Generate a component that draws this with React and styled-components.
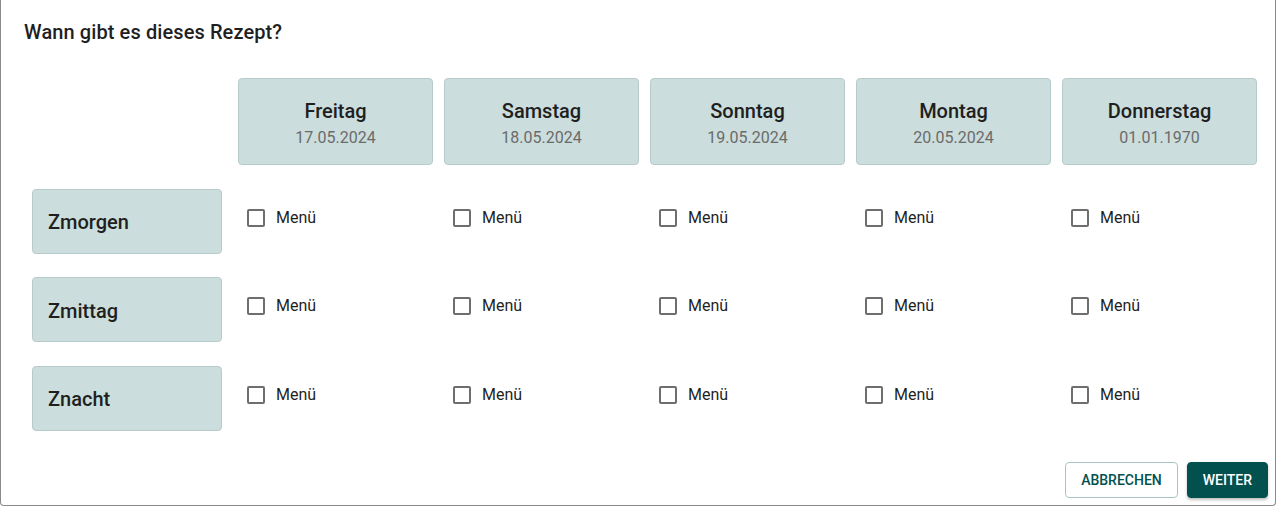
import React from 'react';
import styled, { createGlobalStyle } from 'styled-components';

const colors = {
  text: '#1f1f1f',
  muted: '#6b6b6b',
  card: '#cbdddc',
  cardBorder: '#b7cbca',
  teal: '#03514f',
  frame: '#8a8a8a',
};

const GlobalStyle = createGlobalStyle`
  html, body {
    margin: 0;
    padding: 0;
    background: #ffffff;
    font-family: Roboto, "Liberation Sans", sans-serif;
  }
`;

const Dialog = styled.div`
  box-sizing: border-box;
  width: 1276px;
  height: 506px;
  border: 1px solid ${colors.frame};
  border-top: none;
  border-radius: 0 0 4px 4px;
  background: #fff;
  display: flex;
  flex-direction: column;
`;

const Title = styled.h2`
  margin: 0;
  padding: 19px 23px 0;
  font-size: 20px;
  font-weight: 500;
  line-height: 26px;
  letter-spacing: 0.1px;
  color: ${colors.text};
`;

const Grid = styled.div`
  display: grid;
  grid-template-columns: repeat(6, 195px);
  grid-template-rows: 87px repeat(3, 65px);
  column-gap: 11px;
  row-gap: 23.5px;
  padding: 33px 0 0 31px;
`;

const DayCard = styled.div`
  box-sizing: border-box;
  background: ${colors.card};
  border: 1px solid ${colors.cardBorder};
  border-radius: 4px;
  display: flex;
  flex-direction: column;
  align-items: center;
  justify-content: center;
  gap: 3px;
  padding-top: 4px;
`;

const DayName = styled.div`
  font-size: 20px;
  font-weight: 500;
  line-height: 26px;
  color: ${colors.text};
`;

const DayDate = styled.div`
  font-size: 16px;
  line-height: 22px;
  color: ${colors.muted};
`;

const MealLabel = styled.div`
  box-sizing: border-box;
  width: 190px;
  background: ${colors.card};
  border: 1px solid ${colors.cardBorder};
  border-radius: 4px;
  display: flex;
  align-items: center;
  padding: 2px 0 0 15px;
  font-size: 20px;
  font-weight: 500;
  color: ${colors.text};
`;

const Cell = styled.label`
  display: flex;
  align-items: flex-start;
  gap: 11px;
  padding: 20px 0 0 9px;
  font-size: 16px;
  line-height: 18px;
  color: ${colors.text};
`;

const Box = styled.span`
  box-sizing: border-box;
  width: 18px;
  height: 18px;
  border: 2px solid #6e6e6e;
  border-radius: 2px;
  flex: none;
`;

const Actions = styled.div`
  margin-top: auto;
  display: flex;
  justify-content: flex-end;
  gap: 9px;
  padding: 0 7px 7px 0;
`;

const Button = styled.button`
  box-sizing: border-box;
  height: 36px;
  padding: 0 15px;
  border-radius: 4px;
  font-family: Roboto, "Liberation Sans", sans-serif;
  font-size: 14px;
  font-weight: 500;
  letter-spacing: 0;
  text-transform: uppercase;
  cursor: pointer;
  border: 1px solid ${p => (p.$primary ? colors.teal : '#a9c6c5')};
  background: ${p => (p.$primary ? colors.teal : '#fff')};
  color: ${p => (p.$primary ? '#fff' : colors.teal)};
  box-shadow: ${p => (p.$primary ? '0 2px 3px rgba(0,0,0,0.25)' : 'none')};
`;

const days = [
  { name: 'Freitag', date: '17.05.2024' },
  { name: 'Samstag', date: '18.05.2024' },
  { name: 'Sonntag', date: '19.05.2024' },
  { name: 'Montag', date: '20.05.2024' },
  { name: 'Donnerstag', date: '01.01.1970' },
];

const meals = ['Zmorgen', 'Zmittag', 'Znacht'];

export default function App() {
  return (
    <>
      <GlobalStyle />
      <Dialog>
        <Title>Wann gibt es dieses Rezept?</Title>
        <Grid>
          <div />
          {days.map(d => (
            <DayCard key={d.name}>
              <DayName>{d.name}</DayName>
              <DayDate>{d.date}</DayDate>
            </DayCard>
          ))}
          {meals.map(m => (
            <React.Fragment key={m}>
              <MealLabel>{m}</MealLabel>
              {days.map(d => (
                <Cell key={d.name}>
                  <Box />
                  Menü
                </Cell>
              ))}
            </React.Fragment>
          ))}
        </Grid>
        <Actions>
          <Button>Abbrechen</Button>
          <Button $primary>Weiter</Button>
        </Actions>
      </Dialog>
    </>
  );
}
